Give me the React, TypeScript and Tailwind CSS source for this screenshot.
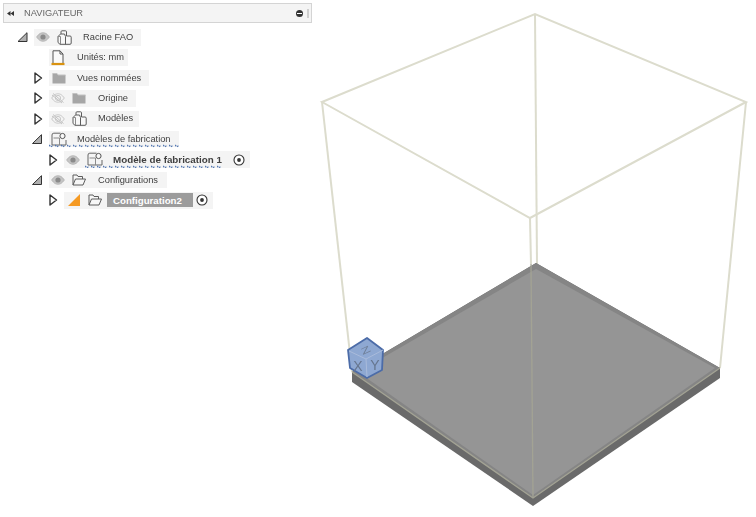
import React from "react";

const Eye = ({ off = false }: { off?: boolean }) => (
  <svg width="14" height="12" viewBox="0 0 14 12" className="shrink-0">
    <path d="M0.7 6C3 2.6 5 1.8 7 1.8S11 2.6 13.3 6C11 9.4 9 10.2 7 10.2S3 9.4 0.7 6Z" fill={off ? "none" : "#c4c4c4"} stroke={off ? "#c8c8c8" : "#b4b4b4"} strokeWidth="1" />
    <circle cx="7" cy="6" r="2.6" fill={off ? "none" : "#8a8a8a"} stroke={off ? "#c8c8c8" : "none"} />
    {off && <path d="M2 1.5L12.5 10.5M1 3L11 11" stroke="#c4c4c4" strokeWidth="1" fill="none" />}
  </svg>
);

const Folder = () => (
  <svg width="14" height="12" viewBox="0 0 14 12" className="shrink-0">
    <path d="M0.5 1.5H5L6 3H13.5V11.5H0.5Z" fill="#a6a6a6" />
    <path d="M0.5 1.5H5L6 3H13.5" fill="none" stroke="#c2c2c2" />
  </svg>
);

const OpenFolder = () => (
  <svg width="14" height="12" viewBox="0 0 14 12" className="shrink-0">
    <path d="M1 11V1H5L6 2.5H10.5V5M1 11L3.5 5H13.5L11 11Z" fill="#f7f7f7" stroke="#5c5c5c" strokeWidth="1" strokeLinejoin="round" />
  </svg>
);

const Bodies = () => (
  <svg width="15" height="15" viewBox="0 0 15 15" className="shrink-0">
    <path d="M4 4V1.8Q4 0.8 5 0.8H8.5Q9.5 0.8 9.5 1.8V6H13Q14.2 6 14.2 7.2V13Q14.2 14.3 13 14.3H8" fill="#f8f8f8" stroke="#5c5c5c" />
    <path d="M1 6.5L3.5 4H7.5L8.5 6.5V14.3H3L1 12.5Z" fill="#f8f8f8" stroke="#5c5c5c" strokeLinejoin="round" />
    <path d="M1 6.5H3.5V14" stroke="#8a8a8a" fill="none" />
  </svg>
);

const Doc = () => (
  <svg width="14" height="16" viewBox="0 0 14 16" className="shrink-0">
    <path d="M2 13V0.8H9L12 4V13" fill="#fafafa" stroke="#555" />
    <path d="M9 0.8V4H12" fill="none" stroke="#555" />
    <path d="M0.5 14H13.5" stroke="#d9920f" strokeWidth="2.2" />
  </svg>
);

const Setup = () => (
  <svg width="16" height="15" viewBox="0 0 16 15" className="shrink-0">
    <path d="M1 13V3Q1 1.2 2.8 1.2H9.5M1 13H15V8" fill="none" stroke="#666" />
    <path d="M2.5 6H8.5V13" fill="none" stroke="#8a8a8a" />
    <circle cx="11.5" cy="4" r="2.6" fill="#f8f8f8" stroke="#555" />
  </svg>
);

const Expand = () => (
  <svg width="9" height="12" viewBox="0 0 9 12" className="shrink-0 ml-[1.5px]">
    <path d="M1 1L7.5 6L1 11Z" fill="#fff" stroke="#333" strokeWidth="1.4" strokeLinejoin="round" />
  </svg>
);

const Collapse = ({ big = false }: { big?: boolean }) => (
  <svg width={big ? 11 : 10} height="10" viewBox="0 0 10 10" className="shrink-0">
    <path d="M0.5 9.5L9.5 0.7V9.5Z" fill="#b0b0b0" stroke="#333" strokeWidth="1" strokeLinejoin="round" />
  </svg>
);

const Radio = () => (
  <svg width="12" height="12" viewBox="0 0 12 12" className="shrink-0">
    <circle cx="6" cy="6" r="5" fill="#fff" stroke="#333" strokeWidth="1.1" />
    <circle cx="6" cy="6" r="1.9" fill="#333" />
  </svg>
);

const Wavy = () => (
  <svg className="absolute left-0 bottom-[-1px] w-full h-[4px]" aria-hidden="true">
    <defs>
      <pattern id="wv" width="6" height="4" patternUnits="userSpaceOnUse">
        <path d="M0 1L2 3L4 1" fill="none" stroke="#4f74b0" strokeWidth="1.2" strokeDasharray="1.8 1.2" />
      </pattern>
    </defs>
    <rect width="100%" height="4" fill="url(#wv)" />
  </svg>
);

const Slot = ({ children }: { children?: React.ReactNode }) => (
  <div className="w-[17px] flex items-center shrink-0">{children}</div>
);

const Chip = ({ className = "", children }: { className?: string; children: React.ReactNode }) => (
  <div className={`relative h-[16.5px] flex items-center bg-[#f4f4f4] pl-[2px] ${className}`}>{children}</div>
);

const Cube = () => (
  <g>
    <path d="M348 350L367 338L383 350L382 370L367 378L350 368Z" fill="#8ea8d2" stroke="#4c6ca8" strokeWidth="1.8" strokeLinejoin="round" />
    <path d="M349 351L366 359L383 350M366 359L367 377" fill="none" stroke="#a9bbdb" strokeWidth="1" />
    <text x="0" y="0" transform="translate(367 353) rotate(-25) scale(1.1 0.65)" textAnchor="middle" fontSize="14" fill="#6f7f97" fontFamily="Liberation Sans">Z</text>
    <text x="358" y="371" textAnchor="middle" fontSize="14" fill="#66768f" fontFamily="Liberation Sans">X</text>
    <text x="375" y="370" textAnchor="middle" fontSize="14" fill="#66768f" fontFamily="Liberation Sans">Y</text>
  </g>
);

const Scene = () => (
  <svg className="absolute inset-0 blur-[0.4px]" width="756" height="517" viewBox="0 0 756 517" aria-hidden="true">
    <g fill="none" stroke="#dcdccd" strokeWidth="2">
      <path d="M322 102L535 14L746 102L530 218Z" />
      <path d="M322 102L352 372" />
      <path d="M746 102L720 368" />
      <path d="M535 14L537 264" />
      <path d="M530 218L531 264" />
    </g>
    <path d="M352 372L536 263L720 368V378L533 506L352 382Z" fill="#6a6a6a" />
    <path d="M352 372L536 263L720 368L533 498Z" fill="#858585" />
    <path d="M358 372L536 269L715 368L533 495Z" fill="#959595" />
    <g fill="none" stroke="#a3a394" strokeWidth="1.3">
      <path d="M531 264L533 498" />
      <path d="M352 372L533 498L720 368" />
    </g>
    <Cube />
  </svg>
);

export default function App() {
  return (
    <div className="relative w-[756px] h-[517px] bg-white overflow-hidden font-['Liberation_Sans',Arial,sans-serif] text-[9.3px] text-[#404040]">
      <Scene />
      <div className="relative w-[312px] pt-[3px] pl-[3px] blur-[0.35px]">
        <div className="h-[20px] flex items-center bg-[#f4f4f4] border border-[#d4d4d4] pl-[3px] pr-[2px] text-[#666]">
          <svg width="7" height="5" viewBox="0 0 7 5" className="shrink-0">
            <path d="M3.5 0V5L0 2.5ZM7 0V5L3.5 2.5Z" fill="#333" />
          </svg>
          <span className="ml-[10px] text-[9.3px] pt-[1px]">NAVIGATEUR</span>
          <span className="ml-auto w-[7px] h-[7px] rounded-full bg-[#333] flex items-center justify-center">
            <span className="w-[5px] h-[1px] bg-white" />
          </span>
          <span className="ml-[4px] w-[2px] h-[9px] bg-[#cfcfcf]" />
        </div>

        <div className="flex flex-col gap-[3.9px] mt-[6px] -ml-[3px]">
          <div className="flex items-center pl-[17px]">
            <Slot><Collapse big /></Slot>
            <Chip className="w-[107px]">
              <Eye />
              <span className="ml-[7px]"><Bodies /></span>
              <span className="ml-[11px] pt-[1px]">Racine FAO</span>
            </Chip>
          </div>

          <div className="flex items-center pl-[32px]">
            <Slot />
            <Chip className="w-[79px]">
              <Doc />
              <span className="ml-[12px] pt-[1px]">Unités: mm</span>
            </Chip>
          </div>

          <div className="flex items-center pl-[32px]">
            <Slot><Expand /></Slot>
            <Chip className="w-[100px]">
              <span className="ml-[1px]"><Folder /></span>
              <span className="ml-[11px] pt-[1px]">Vues nommées</span>
            </Chip>
          </div>

          <div className="flex items-center pl-[32px]">
            <Slot><Expand /></Slot>
            <Chip className="w-[87px]">
              <Eye off />
              <span className="ml-[7px]"><Folder /></span>
              <span className="ml-[12px] pt-[1px]">Origine</span>
            </Chip>
          </div>

          <div className="flex items-center pl-[32px]">
            <Slot><Expand /></Slot>
            <Chip className="w-[90px]">
              <Eye off />
              <span className="ml-[7px]"><Bodies /></span>
              <span className="ml-[11px] pt-[1px]">Modèles</span>
            </Chip>
          </div>

          <div className="flex items-center pl-[32px]">
            <Slot><Collapse /></Slot>
            <Chip className="w-[130px]">
              <Setup />
              <span className="ml-[10px] pt-[1px]">Modèles de fabrication</span>
              <Wavy />
            </Chip>
          </div>

          <div className="flex items-center pl-[47px]">
            <Slot><Expand /></Slot>
            <Chip className="w-[186px]">
              <Eye />
              <span className="ml-[7px]"><Setup /></span>
              <span className="ml-[10px] pt-[1px] font-bold text-[9.8px]">Modèle de fabrication 1</span>
              <span className="ml-[11px]"><Radio /></span>
              <span className="absolute left-[21px] bottom-0 w-[137px] h-[4px] overflow-hidden"><Wavy /></span>
            </Chip>
          </div>

          <div className="flex items-center pl-[32px]">
            <Slot><Collapse /></Slot>
            <Chip className="w-[118px]">
              <Eye />
              <span className="ml-[7px]"><OpenFolder /></span>
              <span className="ml-[12px] pt-[1px]">Configurations</span>
            </Chip>
          </div>

          <div className="flex items-center pl-[47px]">
            <Slot><Expand /></Slot>
            <Chip className="w-[149px]">
              <svg width="12" height="12" viewBox="0 0 12 12" className="ml-[2px] shrink-0">
                <path d="M0 12L12 0V12Z" fill="#f59a23" />
              </svg>
              <span className="ml-[8px]"><OpenFolder /></span>
              <span className="ml-[5px] w-[86px] h-[14px] pl-[6px] pt-[1px] bg-[#9c9c9c] text-white font-bold text-[9.7px] flex items-center">Configuration2</span>
              <span className="ml-[3px]"><Radio /></span>
            </Chip>
          </div>
        </div>
      </div>
    </div>
  );
}
